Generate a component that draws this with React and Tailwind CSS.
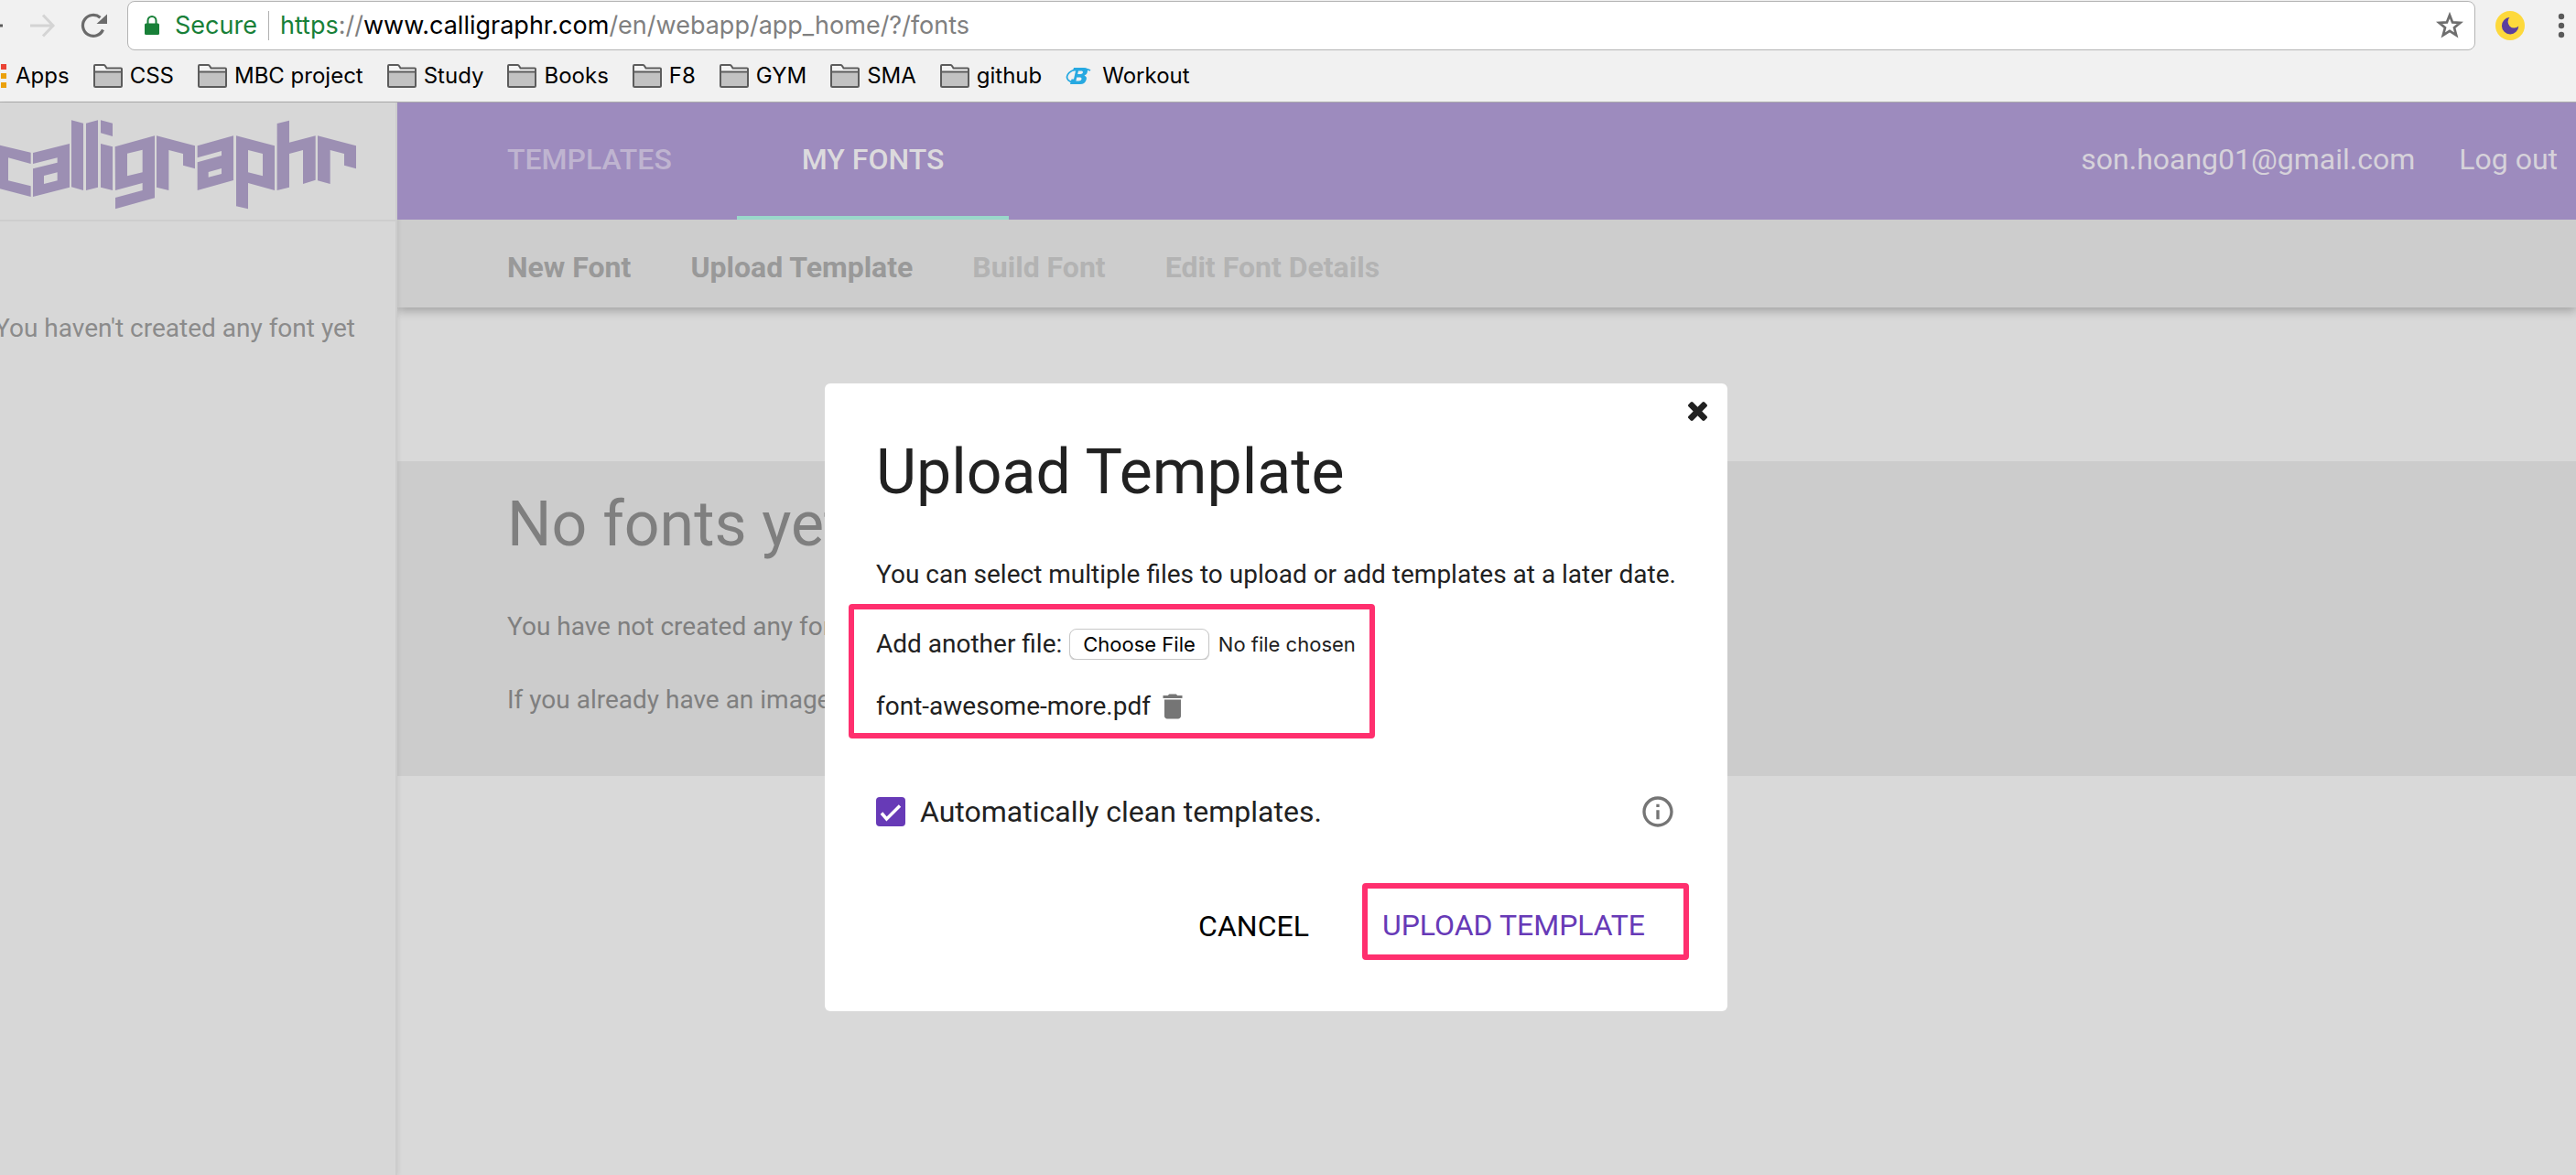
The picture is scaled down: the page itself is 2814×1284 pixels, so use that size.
import { MdDelete, MdInfoOutline } from "react-icons/md";

const bookmarks = ["CSS", "MBC project", "Study", "Books", "F8", "GYM", "SMA", "github"];

function FolderIcon() {
  return (
    <svg width="32" height="26" viewBox="0 0 32 26" className="shrink-0" aria-hidden="true">
      <path d="M1 24.5V1.5H12.5L15 5H31V24.5Z" fill="#f4f4f4" />
      <path d="M2 9H30V24H2Z" fill="#c2c2c2" />
      <path
        d="M1 23.5V2Q1 1 2 1H11.5Q12.5 1 13 2L14.5 4.5H30Q31 4.5 31 5.5V23.5Q31 25 29.500 25H2.500Q1 25 1 23.5ZM1 8.500H31"
        fill="none"
        stroke="#5c5c5c"
        strokeWidth="2"
      />
    </svg>
  );
}

function BrowserBar() {
  return (
    <div className="border-b border-[#acacac] bg-[#f1f1f1] font-['Inter',sans-serif] text-black">
      <div className="flex h-[55px] items-center pt-px pr-3">
        <button aria-label="Back" className="h-8 w-[33px] shrink-0">
          <svg width="33" height="32" viewBox="0 0 33 32">
            <path d="M0 16H3" stroke="#5a5a5a" strokeWidth="3" />
          </svg>
        </button>
        <button aria-label="Forward" className="h-8 w-[54px] shrink-0">
          <svg width="54" height="32" viewBox="0 0 54 32">
            <path d="M0 16H25M14 4.500L25 16L14 27.500" fill="none" stroke="#d4d4d4" strokeWidth="3" />
          </svg>
        </button>
        <button aria-label="Reload" className="h-8 w-[52px] shrink-0">
          <svg width="52" height="32" viewBox="0 0 52 32">
            <path d="M25.500 20.500A11.500 11.500 0 1 1 22.500 7.200" fill="none" stroke="#6b6b6b" strokeWidth="3.200" />
            <path d="M30 3.500V14H18.500Z" fill="#6b6b6b" />
          </svg>
        </button>
        <div className="flex h-[54px] min-w-0 flex-1 items-center rounded-lg border border-[#b4b4b4] bg-white text-[27px] leading-8">
          <svg width="18" height="22" viewBox="0 0 18 22" className="ml-[17px] shrink-0" aria-hidden="true">
            <rect x="1" y="8.500" width="16" height="12.500" rx="1.500" fill="#188038" />
            <path d="M4.500 9V5.500A4.500 4.500 0 0 1 13.500 5.500V9" fill="none" stroke="#188038" strokeWidth="2" />
          </svg>
          <span className="ml-4 text-[#188038]">Secure</span>
          <span className="ml-3 h-8 w-px shrink-0 bg-[#b0b0b0]" />
          <span className="ml-3 flex-1 whitespace-nowrap text-[#808080]">
            <span className="text-[#188038]">https</span>://<span className="text-black">www.calligraphr.com</span>
            /en/webapp/app_home/?/fonts
          </span>
          <button aria-label="Bookmark this page" className="mr-3 shrink-0">
            <svg width="30" height="30" viewBox="0 0 30 30">
              <path
                d="M15 3.500L18.100 11.400L26.600 11.900L20 17.300L22.200 25.500L15 20.900L7.800 25.500L10 17.300L3.400 11.900L11.900 11.400Z"
                fill="none"
                stroke="#6e6e6e"
                strokeWidth="2.700"
              />
            </svg>
          </button>
        </div>
        <button aria-label="Night mode extension" className="ml-[22px] shrink-0">
          <svg width="32" height="32" viewBox="0 0 32 32">
            <circle cx="16" cy="16" r="16" fill="#fdd93c" />
            <path d="M15.500 7A9.200 9.200 0 1 0 25.300 16.500A6.800 6.800 0 0 1 15.500 7Z" fill="#5b3f9e" />
          </svg>
        </button>
        <button aria-label="Menu" className="ml-9 shrink-0">
          <svg width="8" height="28" viewBox="0 0 8 28">
            <circle cx="4" cy="4" r="3.200" fill="#5a5a5a" />
            <circle cx="4" cy="14" r="3.200" fill="#5a5a5a" />
            <circle cx="4" cy="24" r="3.200" fill="#5a5a5a" />
          </svg>
        </button>
      </div>
      <nav aria-label="Bookmarks" className="flex h-14 items-center gap-[26px] text-[24px] leading-8 whitespace-nowrap">
        <a href="#apps" className="flex items-center gap-2.5">
          <svg width="7" height="26" viewBox="0 0 7 26" aria-hidden="true">
            <path d="M1 0H7V6H1Z" fill="#ea4335" />
            <path d="M1 10H7V16H1ZM1 20H7V26H1Z" fill="#eba10c" />
          </svg>
          Apps
        </a>
        {bookmarks.map((name) => (
          <a key={name} href="#folder" className="flex items-center gap-2">
            <FolderIcon />
            {name}
          </a>
        ))}
        <a href="#workout" className="flex items-center gap-3">
          <svg width="28" height="20" viewBox="0 0 28 20" aria-hidden="true">
            <path
              d="M9 1H20Q25 1 24 5Q23.500 8.500 20.500 9.500Q24 11 22.500 14.500Q21 19 16 19H5L6.500 13.500H9L11 4.500H8ZM14 4.500L13.200 8H16.500Q18.500 8 19 6.200Q19.300 4.500 17.500 4.500ZM12.300 11.500L11.400 15.500H14.500Q17 15.500 17.500 13.500Q17.800 11.500 16 11.500Z"
              fill="#27a9e1"
              fillRule="evenodd"
            />
            <path d="M10 3Q2 6 1.500 11Q1.500 15.500 8 17M18 2.500Q24 2 27 4" fill="none" stroke="#27a9e1" strokeWidth="1.800" />
          </svg>
          Workout
        </a>
      </nav>
    </div>
  );
}

function Logo() {
  return (
    <svg width="390" height="100" viewBox="0 60 1170 300" role="img" aria-label="calligraphr" className="shrink-0">
      <g fill="#9c8fb3" fillRule="evenodd">
        <path d="M0 146L101 170V207L27 187V262L101 280V315L0 289Z" />
        <path d="M108 171L228 141V284L108 315V223L188 203V187L108 207ZM144 246L188 235V262L144 273Z" />
        <path d="M234 64L273 74V294L234 283Z" />
        <path d="M282 74L321 64V284L282 294Z" />
        <path d="M330 64L369 74V117L330 106ZM330 141L369 151V294L330 284Z" />
        <path d="M377 151L507 115V319L378 355V318L467 294V270L378 294ZM417 173L467 161V235L417 247Z" />
        <path d="M513 115L639 148V223L600 212V174L553 162V294L513 284Z" />
        <path d="M647 148L765 115V261L647 294V202L726 180V165L647 187ZM683 234L726 222V240L683 251Z" />
        <path d="M774 115L900 148V294L813 270V355L774 346ZM813 162L861 174V247L813 235Z" />
        <path d="M908 75L948 65V137L1034 115V260L993 273V162L948 174V284L908 294Z" />
        <path d="M1041 115L1167 148V223L1128 212V174L1082 162V273L1041 262Z" />
      </g>
    </svg>
  );
}

function Sidebar() {
  return (
    <aside className="relative z-10 flex w-[434px] shrink-0 flex-col border-r-2 border-[#cdcdcd] bg-[#d7d7d7] shadow-[2px_0_4px_rgba(0,0,0,0.06)]">
      <div className="h-[130px] border-b-2 border-[#cdcdcd] pt-[18px]">
        <Logo />
      </div>
      <p className="mt-[97px] flex justify-end pr-[44px] text-[28px] leading-10 whitespace-nowrap text-[#8b8b8b]">
        You haven't created any font yet
      </p>
    </aside>
  );
}

function MainArea() {
  return (
    <main className="flex min-w-0 flex-1 flex-col bg-[#d9d9d9]">
      <header className="relative z-20 flex h-32 justify-between bg-[#9d8bbe] pr-5 pl-[49px] text-[32px] leading-10 font-medium">
        <nav className="flex">
          <a href="#templates" className="flex items-center border-b-4 border-transparent px-[71px] text-[#bfb4d0]">
            TEMPLATES
          </a>
          <a href="#fonts" className="flex items-center border-b-4 border-[#9ad8cb] px-[71px] text-[#dcdadd]">
            MY FONTS
          </a>
        </nav>
        <div className="flex items-center gap-12 pb-1 font-normal text-[#d6d2da]">
          <a href="#account">son.hoang01@gmail.com</a>
          <a href="#logout">Log out</a>
        </div>
      </header>
      <nav className="flex h-24 items-center gap-[65px] bg-[#cdcdcd] pt-2 pl-[120px] text-[32px] leading-10 font-bold text-[#999999] shadow-[0_4px_10px_rgba(0,0,0,0.25)]">
        <button>New Font</button>
        <button>Upload Template</button>
        <button disabled className="text-[#b3b3b3]">Build Font</button>
        <button disabled className="text-[#b3b3b3]">Edit Font Details</button>
      </nav>
      <section className="mt-[168px] bg-[#cccccc] pt-[29px] pb-[63px] pl-[120px] text-[28px] leading-10 text-[#7f7f7f]">
        <h1 className="text-[68px] leading-[80px]">No fonts yet</h1>
        <p className="mt-13">You have not created any font yet</p>
        <p className="mt-10">If you already have an image</p>
      </section>
    </main>
  );
}

function UploadDialog() {
  return (
    <div className="absolute inset-0 z-30 flex items-start justify-center pt-[307px] pr-[26px]">
      <form
        role="dialog"
        aria-labelledby="dialog-title"
        onSubmit={(e) => e.preventDefault()}
        className="relative w-full max-w-[986px] rounded-md bg-white px-14 pt-[57px] pb-14 text-[28px] leading-10 text-[#212121]"
      >
        <button type="button" aria-label="Close" className="absolute top-5 right-[22px]">
          <svg width="21" height="21" viewBox="302 366 1188 1188" className="block">
            <path
              fill="#212121"
              d="M1490 1322q0 40-28 68l-136 136q-28 28-68 28t-68-28l-294-294-294 294q-28 28-68 28t-68-28l-136-136q-28-28-28-68t28-68l294-294-294-294q-28-28-28-68t28-68l136-136q28-28 68-28t68 28l294 294 294-294q28-28 68-28t68 28l136 136q28 28 28 68t-28 68l-294 294 294 294q28 28 28 68z"
            />
          </svg>
        </button>
        <h2 id="dialog-title" className="text-[68px] leading-[80px]">Upload Template</h2>
        <p className="mt-13 whitespace-nowrap">You can select multiple files to upload or add templates at a later date.</p>
        <div className="mt-3 -ml-[30px] flex w-[575px] flex-col gap-7 rounded border-6 border-[#ff2f6e] pt-[18px] pb-[9px] pl-6">
          <div className="flex items-center gap-2">
            <label htmlFor="template-file" className="whitespace-nowrap">Add another file:</label>
            <input
              id="template-file"
              type="file"
              className="w-[330px] font-['Inter',sans-serif] text-[22px] leading-8 file:mr-2.5 file:h-[34px] file:rounded-lg file:border file:border-solid file:border-[#c8c8c8] file:bg-white file:px-3.5 file:text-[22px] file:leading-7 file:font-normal file:text-black file:shadow-[0_1px_1px_rgba(0,0,0,0.2)]"
            />
          </div>
          <div className="flex items-center gap-1.5">
            <span>font-awesome-more.pdf</span>
            <button type="button" aria-label="Remove file">
              <MdDelete className="size-9 text-[#757575]" />
            </button>
          </div>
        </div>
        <div className="mt-15 flex items-center justify-between text-[32px]">
          <label className="flex items-center gap-4">
            <span className="grid">
              <input
                type="checkbox"
                defaultChecked
                className="col-start-1 row-start-1 size-8 appearance-none rounded bg-[#673ab7]"
              />
              <svg width="32" height="32" viewBox="0 0 32 32" className="pointer-events-none col-start-1 row-start-1" aria-hidden="true">
                <path d="M6 17.500L11.500 24L26 9.500" fill="none" stroke="#fff" strokeWidth="3.500" />
              </svg>
            </span>
            Automatically clean templates.
          </label>
          <button type="button" aria-label="Information">
            <MdInfoOutline className="size-10 text-[#757575]" />
          </button>
        </div>
        <div className="mt-[58px] -mr-3.5 flex justify-end gap-[58px] text-[32px]">
          <button type="button" className="pt-2.5 text-black">CANCEL</button>
          <div className="rounded border-6 border-[#ff2f6e] pt-5 pr-[42px] pb-3 pl-4">
            <button type="submit" className="block text-[#673ab7]">UPLOAD TEMPLATE</button>
          </div>
        </div>
      </form>
    </div>
  );
}

export default function App() {
  return (
    <div className="flex min-h-screen flex-col overflow-hidden">
      <BrowserBar />
      <div className="relative flex flex-1 font-['Roboto',sans-serif]">
        <Sidebar />
        <MainArea />
        <UploadDialog />
      </div>
    </div>
  );
}
